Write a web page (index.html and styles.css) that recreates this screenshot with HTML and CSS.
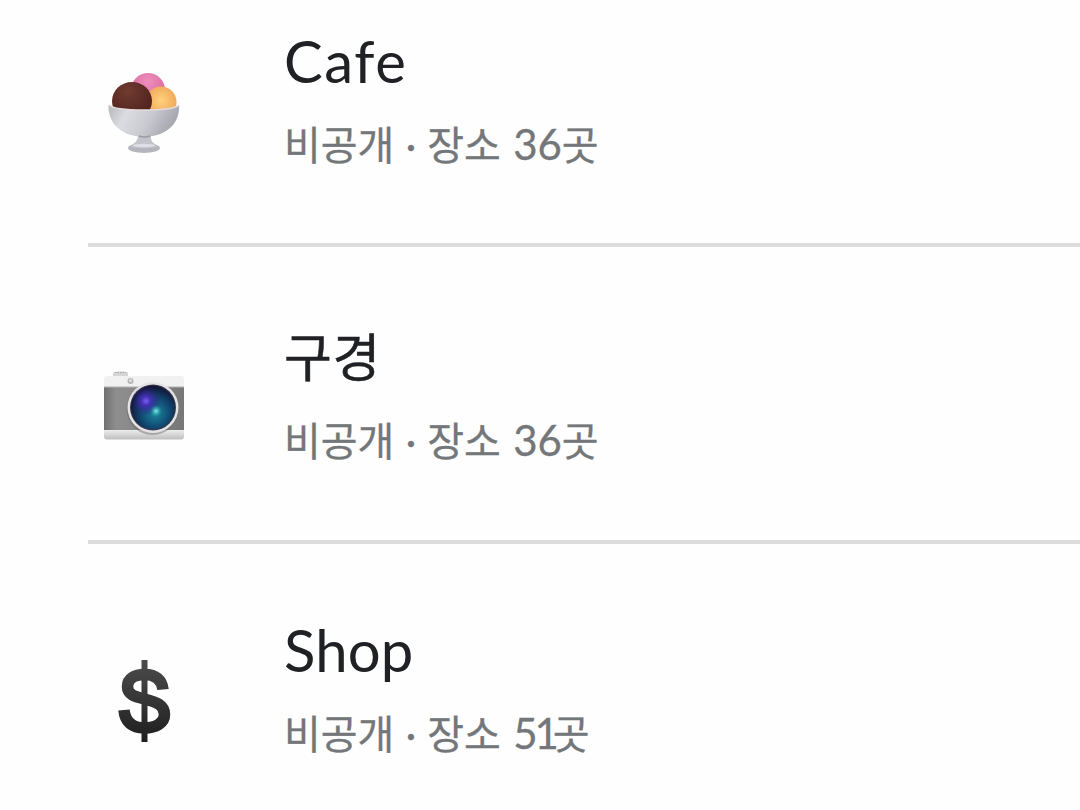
FILE: index.html
```html
<!DOCTYPE html>
<html lang="ko">
<head>
    <meta charset="UTF-8">
    <meta name="viewport" content="width=device-width, initial-scale=1.0">
    <title>내 목록</title>
    <link rel="stylesheet" href="styles.css">
</head>
<body>
    <ul class="lists">
        <li class="list-item cafe">
            <svg class="icon" viewBox="0 0 110 105">
                <defs>
                    <radialGradient id="choco" cx="0.4" cy="0.25" r="0.8">
                        <stop offset="0" stop-color="#713b30"/>
                        <stop offset="1" stop-color="#4a1f1a"/>
                    </radialGradient>
                    <radialGradient id="berry" cx="0.5" cy="0.25" r="0.7">
                        <stop offset="0" stop-color="#ee8fbd"/>
                        <stop offset="1" stop-color="#d5639b"/>
                    </radialGradient>
                    <radialGradient id="mango" cx="0.5" cy="0.45" r="0.6">
                        <stop offset="0" stop-color="#ffd17e"/>
                        <stop offset="1" stop-color="#eda253"/>
                    </radialGradient>
                    <linearGradient id="bowl" x1="0" x2="1" y1="0" y2="0.25">
                        <stop offset="0" stop-color="#b5b6bd"/>
                        <stop offset="0.3" stop-color="#dbdce1"/>
                        <stop offset="0.65" stop-color="#c9cad0"/>
                        <stop offset="1" stop-color="#a6a7af"/>
                    </linearGradient>
                </defs>
                <circle cx="58" cy="30" r="17" fill="url(#berry)"/>
                <circle cx="71" cy="42" r="15.500" fill="url(#mango)"/>
                <ellipse cx="42" cy="41" rx="20" ry="19" fill="url(#choco)"/>
                <ellipse cx="54" cy="88" rx="16" ry="5" fill="#b5b6bd"/>
                <path d="M48 70h13c0 8-1 11 4 14 3 2 4 4-11 4s-14-2-11-4c5-3 5-6 5-14z" fill="#c3c4cb"/>
                <path d="M18.500 45c4 4 20 5 35.500 5s31-1 35-5c1 15-8 26-22 30-8 2-18 2-26 0-14-4-23-15-22.500-30z" fill="url(#bowl)"/>
                <path d="M19 45c4 4 20 5 35 5s31-1 35-5" fill="none" stroke="#e4dadd" stroke-width="1.500"/>
                <path d="M49 76c3 1 8 1 11 0" fill="none" stroke="#999aa3" stroke-width="1.500"/>
                <ellipse cx="54" cy="85.500" rx="11" ry="1.800" fill="#dedfe4"/>
            </svg>
            <div class="info">
                <h2 class="title">Cafe</h2>
                <p class="meta">비공개 · 장소 <span class="count">36</span>곳</p>
            </div>
        </li>
        <li class="list-item sights">
            <svg class="icon" viewBox="0 0 110 90">
                <defs>
                    <linearGradient id="shell" x1="0" x2="0" y1="0" y2="1">
                        <stop offset="0" stop-color="#f1f1f1"/>
                        <stop offset="0.85" stop-color="#ededed"/>
                        <stop offset="1" stop-color="#bebebe"/>
                    </linearGradient>
                    <linearGradient id="leather" x1="0" x2="1" y1="0" y2="0">
                        <stop offset="0" stop-color="#707070"/>
                        <stop offset="0.15" stop-color="#8e8e8e"/>
                        <stop offset="0.6" stop-color="#858585"/>
                        <stop offset="1" stop-color="#777777"/>
                    </linearGradient>
                    <radialGradient id="glass" cx="0.55" cy="0.62" r="0.6">
                        <stop offset="0" stop-color="#1b8a9c"/>
                        <stop offset="0.5" stop-color="#124f78"/>
                        <stop offset="1" stop-color="#101332"/>
                    </radialGradient>
                    <radialGradient id="violet">
                        <stop offset="0" stop-color="#7861ed"/>
                        <stop offset="0.3" stop-color="#4430b5"/>
                        <stop offset="1" stop-color="#281f78" stop-opacity="0"/>
                    </radialGradient>
                    <radialGradient id="cyan">
                        <stop offset="0" stop-color="#7ff0ee"/>
                        <stop offset="1" stop-color="#23a0af" stop-opacity="0"/>
                    </radialGradient>
                </defs>
                <path d="M23 17v-4c0-2 15-2 15 0v4z" fill="#d6d6d6"/>
                <path d="M25 12.500h11" stroke="#a5a5a5" stroke-dasharray="1.500 1"/>
                <rect x="14" y="16" width="80" height="63.500" rx="3" fill="url(#shell)"/>
                <rect x="14" y="27" width="80" height="43" fill="url(#leather)"/>
                <path d="M14 27h80" stroke="#b2b2b2"/>
                <circle cx="40.500" cy="21" r="3" fill="#b5b5b5"/>
                <circle cx="40.500" cy="20.500" r="1.500" fill="#e3e3e3"/>
                <circle cx="62.500" cy="49" r="26" fill="#666666" opacity="0.45"/>
                <circle cx="63" cy="47.500" r="25.500" fill="#e4e4e7"/>
                <circle cx="63" cy="47.500" r="23" fill="#3c3b4d"/>
                <circle cx="63" cy="47.500" r="22" fill="url(#glass)"/>
                <circle cx="56" cy="41" r="15" fill="url(#violet)"/>
                <circle cx="66" cy="51" r="6" fill="url(#cyan)"/>
            </svg>
            <div class="info">
                <h2 class="title">구경</h2>
                <p class="meta">비공개 · 장소 <span class="count">36</span>곳</p>
            </div>
        </li>
        <li class="list-item shop">
            <svg class="icon" viewBox="0 0 110 100">
                <defs>
                    <linearGradient id="ink" gradientUnits="userSpaceOnUse" x1="0" x2="0" y1="10" y2="92">
                        <stop offset="0" stop-color="#4c4c4c"/>
                        <stop offset="1" stop-color="#1e1e1e"/>
                    </linearGradient>
                </defs>
                <path d="M54.500 10v82" fill="none" stroke="url(#ink)" stroke-width="6"/>
                <path d="M73 39.500C72 30 66 24.500 54.500 24.500c-10 0-17 4-17 12 0 8 7 10 17 12.500 12 3 20 6 20 15.500C74.500 73 66 78 54.500 78 42 78 35 72 34 60" fill="none" stroke="url(#ink)" stroke-width="11.500"/>
            </svg>
            <div class="info">
                <h2 class="title">Shop</h2>
                <p class="meta">비공개 · 장소 <span class="count narrow">51</span>곳</p>
            </div>
        </li>
    </ul>
</body>
</html>
```

FILE: styles.css
```css
body {
    margin: 0;
    height: 810px;
    overflow: hidden;
    background: #fefefe;
    font-family: Lato, "Noto Sans CJK KR", sans-serif;
}
.lists {
    list-style: none;
    margin: 0;
    padding: 0 0 0 88px;
}
.list-item {
    display: flex;
    align-items: flex-start;
    box-sizing: border-box;
    height: 297px;
    border-bottom: 4px solid #dcdcdc;
}
.list-item.cafe {
    height: 247px;
}
.list-item.shop {
    height: 266px;
    border-bottom: none;
}
.icon {
    width: 110px;
    margin-left: 2px;
    flex: none;
}
.cafe .icon { height: 105px; margin-top: 60px; }
.sights .icon { height: 90px; margin-top: 113px; }
.shop .icon { height: 100px; margin-top: 106px; }
.info {
    margin-left: 84px;
    white-space: nowrap;
}
.cafe .info { padding-top: 26px; }
.sights .info { padding-top: 75px; }
.shop .info { padding-top: 71px; }
.title {
    margin: 0;
    height: 92px;
    line-height: 70px;
    font-size: 58px;
    font-weight: 400;
    color: #202124;
}
.cafe .title {
    letter-spacing: 1.6px;
}
.shop .title {
    letter-spacing: 0.2px;
}
.sights .title {
    line-height: 71px;
    font-size: 52px;
    letter-spacing: 0.6px;
    -webkit-text-stroke: 0.5px #202124;
}
.meta {
    margin: 0;
    line-height: 52px;
    font-size: 40px;
    word-spacing: 1px;
    color: #74777a;
    -webkit-text-stroke: 0.3px #74777a;
}
.count {
    margin-left: 1px;
    font-size: 42px;
}
.narrow {
    letter-spacing: -3px;
    margin-right: -3px;
}
```
